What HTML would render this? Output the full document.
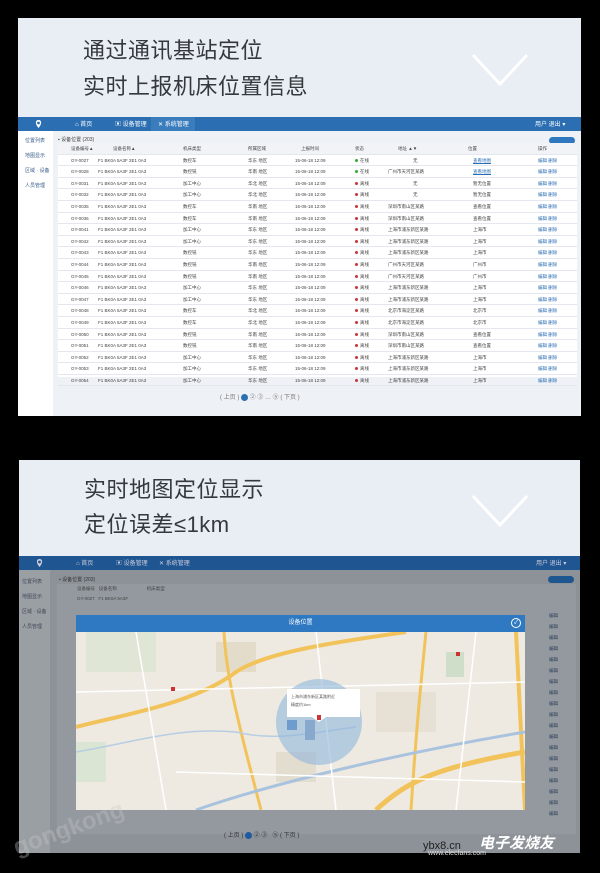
<!DOCTYPE html>
<html><head><meta charset="utf-8"><style>
*{margin:0;padding:0;box-sizing:border-box}
body{width:600px;height:873px;background:#000;position:relative;overflow:hidden;font-family:"Liberation Sans","Noto Sans CJK SC",sans-serif}
.panel{position:absolute;background:#e9eef4}
.title{position:absolute;left:65px;font-size:22px;color:#35393e;letter-spacing:0.5px;line-height:26px}
.chev{position:absolute;width:60px;height:36px}
.nav{position:absolute;left:0;right:0;height:14px;background:#2b6fb2}
.nav span{position:absolute;top:2px;font-size:6px;color:#fff}
.side{position:absolute;left:0;width:35px;background:#fff}
.side div{font-size:5px;color:#3b5f8a;height:15px;padding-left:7px}
.tbl{position:absolute;left:40px;right:4px;background:#fff;font-size:4.5px;color:#444}
.r{height:11.6px;border-bottom:1px solid #e4e8ee;position:relative}
.r span{position:absolute;top:3px}
.h{background:#f1f3f6;color:#444}
.dot{display:inline-block;width:3px;height:3px;border-radius:50%;background:#c33;margin-right:2px}
.lk{color:#2a6db5;text-decoration:underline}
.pg{position:absolute;font-size:6px;color:#777}
</style></head><body>

<!-- TOP PANEL -->
<div class="panel" style="left:18px;top:18px;width:563px;height:398px;">
  <div class="title" style="top:20px">通过通讯基站定位</div>
  <div class="title" style="top:56px">实时上报机床位置信息</div>
  <svg class="chev" style="left:452px;top:34px" viewBox="0 0 60 36"><polyline points="3,3 30,32 57,3" fill="none" stroke="#fff" stroke-width="3"/></svg>
  <div class="nav" style="top:99px">
    <svg style="position:absolute;left:16px;top:2px" width="9" height="10" viewBox="0 0 9 10"><path d="M4.5 9 C1 5 1 1 4.5 1 C8 1 8 5 4.5 9Z" fill="#fff"/><circle cx="4.5" cy="4" r="1.4" fill="#2b6fb2"/></svg>
    <span style="left:57px">⌂ 首页</span><span style="left:97px">▣ 设备管理</span>
    <div style="position:absolute;left:133px;top:0;width:44px;height:14px;background:#3a7dbd"></div>
    <span style="left:140px">✕ 系统管理</span>
    <span style="left:517px">用户 退出 ▾</span>
  </div>
  <div style="position:absolute;left:0;top:113px;width:563px;height:285px;background:#eef1f5"></div>
  <div class="side" style="top:113px;height:285px;padding-top:6px">
    <div>位置列表</div><div>地图显示</div><div>区域 · 设备</div><div>人员管理</div>
  </div>
  <div style="position:absolute;left:40px;top:118px;font-size:5px;color:#444">▪ 设备位置 (203)</div>
  <div style="position:absolute;right:6px;top:119px;width:26px;height:7px;border-radius:4px;background:#2f78c0"></div>
  <div class="tbl" style="top:125px;height:234px">
    <div class="r h"><span style="left:13px">设备编号▲</span><span style="left:55px">设备名称▲</span><span style="left:125px">机床类型</span><span style="left:190px">所属区域</span><span style="left:243px">上报时间</span><span style="left:297px">状态</span><span style="left:340px">地址 ▲▼</span><span style="left:410px">位置</span><span style="left:480px">操作</span></div>
    <div class="r"><span style="left:13px">GY-0027</span><span style="left:40px">F1 BK0A 5A3F 2E1 0A3</span><span style="left:125px">数控车</span><span style="left:190px">华东 地区</span><span style="left:237px">15-06-18 12:09</span><span style="left:297px"><i class="dot" style="background:#3a3"></i>在线</span><span style="left:355px">无</span><span style="left:415px" class="lk">查看地图</span><span style="left:480px;color:#2a6db5">编辑 删除</span></div>
    <div class="r"><span style="left:13px">GY-0028</span><span style="left:40px">F1 BK0A 5A3F 2E1 0A3</span><span style="left:125px">数控铣</span><span style="left:190px">华南 地区</span><span style="left:237px">15-06-18 12:09</span><span style="left:297px"><i class="dot" style="background:#3a3"></i>在线</span><span style="left:330px">广州市天河区某路</span><span style="left:415px" class="lk">查看地图</span><span style="left:480px;color:#2a6db5">编辑 删除</span></div>
    <div class="r"><span style="left:13px">GY-0031</span><span style="left:40px">F1 BK0A 5A3F 2E1 0A3</span><span style="left:125px">加工中心</span><span style="left:190px">华北 地区</span><span style="left:237px">15-06-18 12:09</span><span style="left:297px"><i class="dot"></i>离线</span><span style="left:355px">无</span><span style="left:415px">暂无位置</span><span style="left:480px;color:#2a6db5">编辑 删除</span></div>
    <div class="r"><span style="left:13px">GY-0032</span><span style="left:40px">F1 BK0A 5A3F 2E1 0A3</span><span style="left:125px">加工中心</span><span style="left:190px">华北 地区</span><span style="left:237px">15-06-18 12:09</span><span style="left:297px"><i class="dot"></i>离线</span><span style="left:355px">无</span><span style="left:415px">暂无位置</span><span style="left:480px;color:#2a6db5">编辑 删除</span></div>
    <div class="r"><span style="left:13px">GY-0035</span><span style="left:40px">F1 BK0A 5A3F 2E1 0A3</span><span style="left:125px">数控车</span><span style="left:190px">华南 地区</span><span style="left:237px">15-06-18 12:09</span><span style="left:297px"><i class="dot"></i>离线</span><span style="left:330px">深圳市南山区某路</span><span style="left:415px">查看位置</span><span style="left:480px;color:#2a6db5">编辑 删除</span></div>
    <div class="r"><span style="left:13px">GY-0036</span><span style="left:40px">F1 BK0A 5A3F 2E1 0A3</span><span style="left:125px">数控车</span><span style="left:190px">华南 地区</span><span style="left:237px">15-06-18 12:09</span><span style="left:297px"><i class="dot"></i>离线</span><span style="left:330px">深圳市南山区某路</span><span style="left:415px">查看位置</span><span style="left:480px;color:#2a6db5">编辑 删除</span></div>
    <div class="r"><span style="left:13px">GY-0041</span><span style="left:40px">F1 BK0A 5A3F 2E1 0A3</span><span style="left:125px">加工中心</span><span style="left:190px">华东 地区</span><span style="left:237px">15-06-18 12:09</span><span style="left:297px"><i class="dot"></i>离线</span><span style="left:330px">上海市浦东新区某路</span><span style="left:415px">上海市</span><span style="left:480px;color:#2a6db5">编辑 删除</span></div>
    <div class="r"><span style="left:13px">GY-0042</span><span style="left:40px">F1 BK0A 5A3F 2E1 0A3</span><span style="left:125px">加工中心</span><span style="left:190px">华东 地区</span><span style="left:237px">15-06-18 12:09</span><span style="left:297px"><i class="dot"></i>离线</span><span style="left:330px">上海市浦东新区某路</span><span style="left:415px">上海市</span><span style="left:480px;color:#2a6db5">编辑 删除</span></div>
    <div class="r"><span style="left:13px">GY-0043</span><span style="left:40px">F1 BK0A 5A3F 2E1 0A3</span><span style="left:125px">数控铣</span><span style="left:190px">华东 地区</span><span style="left:237px">15-06-18 12:09</span><span style="left:297px"><i class="dot"></i>离线</span><span style="left:330px">上海市浦东新区某路</span><span style="left:415px">上海市</span><span style="left:480px;color:#2a6db5">编辑 删除</span></div>
    <div class="r"><span style="left:13px">GY-0044</span><span style="left:40px">F1 BK0A 5A3F 2E1 0A3</span><span style="left:125px">数控铣</span><span style="left:190px">华南 地区</span><span style="left:237px">15-06-18 12:09</span><span style="left:297px"><i class="dot"></i>离线</span><span style="left:330px">广州市天河区某路</span><span style="left:415px">广州市</span><span style="left:480px;color:#2a6db5">编辑 删除</span></div>
    <div class="r"><span style="left:13px">GY-0045</span><span style="left:40px">F1 BK0A 5A3F 2E1 0A3</span><span style="left:125px">数控铣</span><span style="left:190px">华南 地区</span><span style="left:237px">15-06-18 12:09</span><span style="left:297px"><i class="dot"></i>离线</span><span style="left:330px">广州市天河区某路</span><span style="left:415px">广州市</span><span style="left:480px;color:#2a6db5">编辑 删除</span></div>
    <div class="r"><span style="left:13px">GY-0046</span><span style="left:40px">F1 BK0A 5A3F 2E1 0A3</span><span style="left:125px">加工中心</span><span style="left:190px">华东 地区</span><span style="left:237px">15-06-18 12:09</span><span style="left:297px"><i class="dot"></i>离线</span><span style="left:330px">上海市浦东新区某路</span><span style="left:415px">上海市</span><span style="left:480px;color:#2a6db5">编辑 删除</span></div>
    <div class="r"><span style="left:13px">GY-0047</span><span style="left:40px">F1 BK0A 5A3F 2E1 0A3</span><span style="left:125px">加工中心</span><span style="left:190px">华东 地区</span><span style="left:237px">15-06-18 12:09</span><span style="left:297px"><i class="dot"></i>离线</span><span style="left:330px">上海市浦东新区某路</span><span style="left:415px">上海市</span><span style="left:480px;color:#2a6db5">编辑 删除</span></div>
    <div class="r"><span style="left:13px">GY-0048</span><span style="left:40px">F1 BK0A 5A3F 2E1 0A3</span><span style="left:125px">数控车</span><span style="left:190px">华北 地区</span><span style="left:237px">15-06-18 12:09</span><span style="left:297px"><i class="dot"></i>离线</span><span style="left:330px">北京市海淀区某路</span><span style="left:415px">北京市</span><span style="left:480px;color:#2a6db5">编辑 删除</span></div>
    <div class="r"><span style="left:13px">GY-0049</span><span style="left:40px">F1 BK0A 5A3F 2E1 0A3</span><span style="left:125px">数控车</span><span style="left:190px">华北 地区</span><span style="left:237px">15-06-18 12:09</span><span style="left:297px"><i class="dot"></i>离线</span><span style="left:330px">北京市海淀区某路</span><span style="left:415px">北京市</span><span style="left:480px;color:#2a6db5">编辑 删除</span></div>
    <div class="r"><span style="left:13px">GY-0050</span><span style="left:40px">F1 BK0A 5A3F 2E1 0A3</span><span style="left:125px">数控铣</span><span style="left:190px">华南 地区</span><span style="left:237px">15-06-18 12:09</span><span style="left:297px"><i class="dot"></i>离线</span><span style="left:330px">深圳市南山区某路</span><span style="left:415px">查看位置</span><span style="left:480px;color:#2a6db5">编辑 删除</span></div>
    <div class="r"><span style="left:13px">GY-0051</span><span style="left:40px">F1 BK0A 5A3F 2E1 0A3</span><span style="left:125px">数控铣</span><span style="left:190px">华南 地区</span><span style="left:237px">15-06-18 12:09</span><span style="left:297px"><i class="dot"></i>离线</span><span style="left:330px">深圳市南山区某路</span><span style="left:415px">查看位置</span><span style="left:480px;color:#2a6db5">编辑 删除</span></div>
    <div class="r"><span style="left:13px">GY-0052</span><span style="left:40px">F1 BK0A 5A3F 2E1 0A3</span><span style="left:125px">加工中心</span><span style="left:190px">华东 地区</span><span style="left:237px">15-06-18 12:09</span><span style="left:297px"><i class="dot"></i>离线</span><span style="left:330px">上海市浦东新区某路</span><span style="left:415px">上海市</span><span style="left:480px;color:#2a6db5">编辑 删除</span></div>
    <div class="r"><span style="left:13px">GY-0053</span><span style="left:40px">F1 BK0A 5A3F 2E1 0A3</span><span style="left:125px">加工中心</span><span style="left:190px">华东 地区</span><span style="left:237px">15-06-18 12:09</span><span style="left:297px"><i class="dot"></i>离线</span><span style="left:330px">上海市浦东新区某路</span><span style="left:415px">上海市</span><span style="left:480px;color:#2a6db5">编辑 删除</span></div>
    <div class="r"><span style="left:13px">GY-0054</span><span style="left:40px">F1 BK0A 5A3F 2E1 0A3</span><span style="left:125px">加工中心</span><span style="left:190px">华东 地区</span><span style="left:237px">15-06-18 12:09</span><span style="left:297px"><i class="dot"></i>离线</span><span style="left:330px">上海市浦东新区某路</span><span style="left:415px">上海市</span><span style="left:480px;color:#2a6db5">编辑 删除</span></div>
  </div>
  <div class="pg" style="left:202px;top:374px">( 上页 ) <b style="display:inline-block;width:7px;height:7px;border-radius:50%;background:#2b6fb2;vertical-align:middle"></b> ② ③ … ⑤ ( 下页 )</div>
</div>

<!-- BOTTOM PANEL -->
<div class="panel" style="left:19px;top:460px;width:561px;height:393px;">
  <div class="title" style="top:17px">实时地图定位显示</div>
  <div class="title" style="top:52px">定位误差≤1km</div>
  <svg class="chev" style="left:451px;top:33px" viewBox="0 0 60 36"><polyline points="3,3 30,32 57,3" fill="none" stroke="#fff" stroke-width="3"/></svg>
  <div class="nav" style="top:96px;background:#1f5691">
    <svg style="position:absolute;left:16px;top:2px" width="9" height="10" viewBox="0 0 9 10"><path d="M4.5 9 C1 5 1 1 4.5 1 C8 1 8 5 4.5 9Z" fill="#ccd"/><circle cx="4.5" cy="4" r="1.4" fill="#1f5691"/></svg>
    <span style="left:57px;color:#ccd">⌂ 首页</span><span style="left:97px;color:#ccd">▣ 设备管理</span><span style="left:140px;color:#ccd">✕ 系统管理</span><span style="left:517px;color:#ccd">用户 退出 ▾</span>
  </div>
  <div style="position:absolute;left:0;top:110px;width:561px;height:283px;background:#8c9298"></div>
  <div style="position:absolute;left:0;top:110px;width:31px;height:283px;background:#9a9fa4"></div>
  <div style="position:absolute;left:3px;top:115px;font-size:5px;color:#445;line-height:15px">位置列表<br>地图显示<br>区域 · 设备<br>人员管理</div>
  <div style="position:absolute;left:40px;top:116px;font-size:5px;color:#333">▪ 设备位置 (203)</div>
  <div style="position:absolute;right:6px;top:116px;width:26px;height:7px;border-radius:4px;background:#1e568f"></div>
  <div style="position:absolute;left:38px;top:124px;width:519px;height:250px;background:#93999f"></div>
  <div style="position:absolute;left:38px;top:124px;width:519px;height:22px;font-size:4.5px;color:#444;line-height:10px;padding-left:20px">设备编号 &nbsp; 设备名称 &nbsp;&nbsp;&nbsp;&nbsp;&nbsp;&nbsp;&nbsp;&nbsp;&nbsp;&nbsp;&nbsp;&nbsp;&nbsp;&nbsp;&nbsp;&nbsp;&nbsp;&nbsp;&nbsp;&nbsp;&nbsp;&nbsp; 机床类型<br>GY-0027 &nbsp; F1 BK0A 5A3F</div>
  <div style="position:absolute;left:530px;top:150px;width:20px;height:220px;font-size:4.5px;color:#2c3e58;line-height:11px">编辑<br>编辑<br>编辑<br>编辑<br>编辑<br>编辑<br>编辑<br>编辑<br>编辑<br>编辑<br>编辑<br>编辑<br>编辑<br>编辑<br>编辑<br>编辑<br>编辑<br>编辑<br>编辑</div>
  <div style="position:absolute;left:57px;top:155px;width:449px;height:17px;background:#2f79c2;color:#fff;font-size:6px;text-align:center;line-height:17px">设备位置
    <span style="position:absolute;right:4px;top:3px;width:10px;height:10px;border:1px solid #fff;border-radius:50%;font-size:6px;line-height:8px">✓</span></div>
  <svg style="position:absolute;left:57px;top:172px" width="449" height="178" viewBox="0 0 449 178">
    <rect width="449" height="178" fill="#eeeae1"/>
    <rect x="10" y="0" width="70" height="40" fill="#dfe6d5"/>
    <rect x="140" y="10" width="40" height="30" fill="#e3dccb"/>
    <rect x="370" y="20" width="18" height="25" fill="#cfdec8"/>
    <rect x="300" y="60" width="60" height="40" fill="#e6e1d4"/>
    <rect x="0" y="110" width="30" height="40" fill="#dae5d3"/>
    <rect x="200" y="120" width="40" height="30" fill="#e3ddcf"/>
    <path d="M0 95 C60 80 120 70 160 40 C190 20 260 10 330 0" stroke="#f2c35a" stroke-width="4" fill="none"/>
    <path d="M148 0 C150 40 160 80 170 120 L185 178" stroke="#f2c35a" stroke-width="3" fill="none"/>
    <path d="M350 0 C345 50 340 100 335 178" stroke="#f2c35a" stroke-width="3" fill="none"/>
    <path d="M440 0 L449 178" stroke="#f2c35a" stroke-width="4" fill="none"/>
    <path d="M300 178 C330 150 360 135 449 120" stroke="#f2c35a" stroke-width="5" fill="none"/>
    <path d="M120 178 C200 150 330 120 449 100" stroke="#a9c3df" stroke-width="3" fill="none"/>
    <path d="M0 120 C60 110 100 95 160 100 C200 110 240 100 280 95" stroke="#b7cde3" stroke-width="1.5" fill="none"/>
    <path d="M60 0 L90 178 M240 0 L260 178 M0 60 L449 50 M100 140 L449 150 M400 0 L380 178" stroke="#fff" stroke-width="1.5" fill="none"/>
    <circle cx="243" cy="90" r="43" fill="#8fb6dc" fill-opacity="0.6"/>
    <rect x="211" y="88" width="10" height="10" fill="#6f9ccf"/>
    <rect x="229" y="88" width="10" height="20" fill="#88a9cd"/>
    <rect x="211" y="57" width="73" height="28" fill="#fff"/>
    <path d="M236 85 L243 90 L250 85Z" fill="#fff"/>
    <rect x="241" y="83" width="4" height="5" fill="#c33"/>
    <rect x="95" y="55" width="4" height="4" fill="#c33"/><rect x="380" y="20" width="4" height="4" fill="#c33"/>
    <text x="215" y="66" font-size="4" fill="#555">上海市浦东新区某路附近</text>
    <text x="215" y="74" font-size="4" fill="#555">精度约1km</text>
  </svg>
  <div class="pg" style="left:205px;top:370px;color:#333">( 上页 ) <b style="display:inline-block;width:7px;height:7px;border-radius:50%;background:#1e5aa0;vertical-align:middle"></b> ② ③ &nbsp; ⑤ ( 下页 )</div>
  <div style="position:absolute;left:-8px;top:355px;font-size:24px;color:rgba(200,200,200,0.35);transform:rotate(-20deg);font-weight:bold">gongkong</div>
  <div style="position:absolute;left:404px;top:380px;font-size:11px;color:#222">ybx8.cn</div>
  <div style="position:absolute;left:460px;top:372px;font-size:15px;color:#fff;font-style:italic;font-weight:bold">电子发烧友</div>
</div>
<div style="position:absolute;left:428px;top:850px;font-size:7px;color:#ddd">www.elecfans.com</div>
</body></html>
